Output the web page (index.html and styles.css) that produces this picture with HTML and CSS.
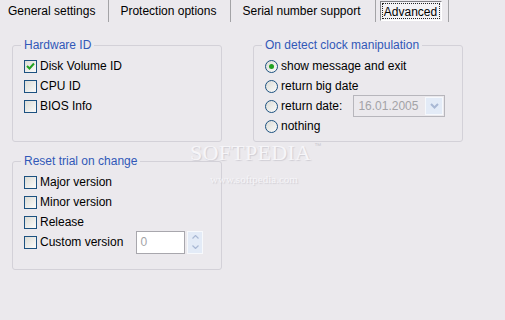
FILE: index.html
```html
<!DOCTYPE html>
<html lang="en">
<head>
    <meta charset="UTF-8">
    <title>Advanced settings</title>
    <link rel="stylesheet" href="styles.css">
</head>
<body>
    <div class="tabs">
        <div class="tab first">General settings</div>
        <div class="tab">Protection options</div>
        <div class="tab">Serial number support</div>
        <div class="tab active"><span class="tab-face"><span class="focus">Advanced</span></span></div>
    </div>

    <div class="content">
        <div class="column">
            <fieldset class="group hw">
                <legend>Hardware ID</legend>
                <div class="opt"><span class="check on"><svg width="9" height="8" viewBox="0 0 9 8"><path d="M1 4 L3.5 6.5 L8 1.5" fill="none" stroke="#21a121" stroke-width="2"/></svg></span>Disk Volume ID</div>
                <div class="opt"><span class="check"></span>CPU ID</div>
                <div class="opt"><span class="check"></span>BIOS Info</div>
            </fieldset>

            <fieldset class="group reset">
                <legend>Reset trial on change</legend>
                <div class="opt"><span class="check"></span>Major version</div>
                <div class="opt"><span class="check"></span>Minor version</div>
                <div class="opt"><span class="check"></span>Release</div>
                <div class="opt"><span class="check"></span>Custom version
                    <span class="spin">
                        <span class="spin-value">0</span>
                        <span class="spin-btns">
                            <span class="spin-btn"><svg width="7" height="4" viewBox="0 0 7 4"><path d="M0.5 3.5 L3.5 0.5 L6.5 3.5" fill="none" stroke="#a9b8d4" stroke-width="1.2"/></svg></span>
                            <span class="spin-btn"><svg width="7" height="4" viewBox="0 0 7 4"><path d="M0.5 0.5 L3.5 3.5 L6.5 0.5" fill="none" stroke="#a9b8d4" stroke-width="1.2"/></svg></span>
                        </span>
                    </span>
                </div>
            </fieldset>
        </div>

        <div class="column">
            <fieldset class="group clock">
                <legend>On detect clock manipulation</legend>
                <div class="opt"><span class="radio on"></span>show message and exit</div>
                <div class="opt"><span class="radio"></span>return big date</div>
                <div class="opt"><span class="radio"></span>return date:
                    <span class="date">
                        <span class="date-value">16.01.2005</span>
                        <span class="drop"><svg width="9" height="6" viewBox="0 0 9 6"><path d="M1 1 L4.5 4.5 L8 1" fill="none" stroke="#a9b8d4" stroke-width="2"/></svg></span>
                    </span>
                </div>
                <div class="opt"><span class="radio"></span>nothing</div>
            </fieldset>
        </div>
    </div>

    <!-- watermark of the screenshot source -->
    <div class="watermark">
        <div class="wm-name">SOFTPEDIA<span class="tm">™</span></div>
        <div class="wm-url">www.softpedia.com</div>
    </div>
</body>
</html>
```

FILE: styles.css
```css
body {
    margin: 0;
    width: 505px;
    height: 320px;
    overflow: hidden;
    background: #ebe9ed;
    font-family: "Liberation Sans", Arial, sans-serif;
    font-size: 12px;
    color: #000;
    position: relative;
}

/* Tab strip */
.tabs {
    display: flex;
    height: 22px;
}

.tab {
    padding: 0 14px 0 11px;
    line-height: 22px;
    border-right: 1px solid #a3a3a6;
    white-space: nowrap;
}

.tab.first {
    padding: 0 13px 0 8px;
}

.tab.active {
    padding: 1px 6px 1px 4px;
    display: flex;
}

.tab-face {
    width: 62px;
    box-sizing: border-box;
    border-left: 1px solid #7f7f84;
    border-top: 1px solid #7f7f84;
    border-right: 1px solid #fff;
    border-bottom: 1px solid #fff;
    background: #f3f2f5;
    padding: 1px;
    display: flex;
}

.focus {
    flex: 1;
    border: 1px dotted #222;
    line-height: 16px;
    text-align: center;
}

/* Group boxes */
.content {
    display: flex;
    gap: 31px;
    padding: 16px 0 0 12px;
}

.column {
    display: flex;
    flex-direction: column;
    gap: 12px;
    width: 210px;
}

.group {
    margin: 0;
    min-width: 0;
    border: 1px solid #d3d1d8;
    border-radius: 3px;
    padding: 4px 10px 25px 11px;
}

.group legend {
    margin-left: -3px;
    padding: 0 3px;
    line-height: 14px;
    color: #3158b8;
}

.group.clock {
    padding-bottom: 5px;
}

.group.reset {
    padding-bottom: 17px;
}

.opt {
    display: flex;
    align-items: center;
    gap: 3px;
    height: 20px;
    white-space: nowrap;
}

.check {
    width: 13px;
    height: 13px;
    box-sizing: border-box;
    border: 1px solid #1c5180;
    background: linear-gradient(135deg, #dcdcd6, #fbfbfa);
    display: flex;
    align-items: center;
    justify-content: center;
}

.radio {
    width: 13px;
    height: 13px;
    box-sizing: border-box;
    border: 1px solid #1c5180;
    border-radius: 50%;
    background: linear-gradient(135deg, #dcdcd6, #fbfbfa);
    display: flex;
    align-items: center;
    justify-content: center;
}

.radio.on::after {
    content: "";
    width: 5px;
    height: 5px;
    border-radius: 50%;
    background: #21a121;
}

/* Date picker (disabled) */
.date {
    margin-left: 8px;
    width: 92px;
    height: 22px;
    box-sizing: border-box;
    border: 1px solid #b7b6bc;
    display: flex;
    align-items: stretch;
    padding: 1px;
}

.date-value {
    flex: 1;
    padding-left: 3px;
    line-height: 18px;
    color: #a3a3a7;
}

.drop {
    width: 16px;
    background: #e3ebf7;
    border: 1px solid #f5f8fc;
    display: flex;
    align-items: center;
    justify-content: center;
}

/* Spin edit (disabled) */
.spin {
    margin-left: 10px;
    display: flex;
    gap: 2px;
    height: 23px;
}

.spin-value {
    width: 49px;
    box-sizing: border-box;
    border: 1px solid #a8a7ad;
    background: #fff;
    padding-left: 3px;
    line-height: 21px;
    color: #a3a3a7;
}

.spin-btns {
    width: 14px;
    display: flex;
    flex-direction: column;
    border: 1px solid #f7f9fc;
}

.spin-btn {
    flex: 1;
    background: #e3ebf7;
    display: flex;
    align-items: center;
    justify-content: center;
}

/* Watermark */
.watermark {
    position: absolute;
    left: 190px;
    top: 141px;
    color: #f6f5f8;
    pointer-events: none;
}

.wm-name {
    display: flex;
    align-items: flex-start;
    font-family: "Liberation Serif", "Times New Roman", serif;
    font-size: 22px;
    line-height: 24px;
    letter-spacing: 0.3px;
    text-shadow: 1px 1px 1px #cfcdd4;
}

.wm-name .tm {
    margin-left: 3px;
    font-family: "Liberation Sans", sans-serif;
    font-size: 7px;
    line-height: 9px;
    color: #c9c7ce;
    text-shadow: none;
}

.wm-url {
    margin: 8px 0 0 20px;
    font-family: "Liberation Serif", serif;
    font-size: 11px;
    text-shadow: 1px 1px 1px #cfcdd4;
}
```
